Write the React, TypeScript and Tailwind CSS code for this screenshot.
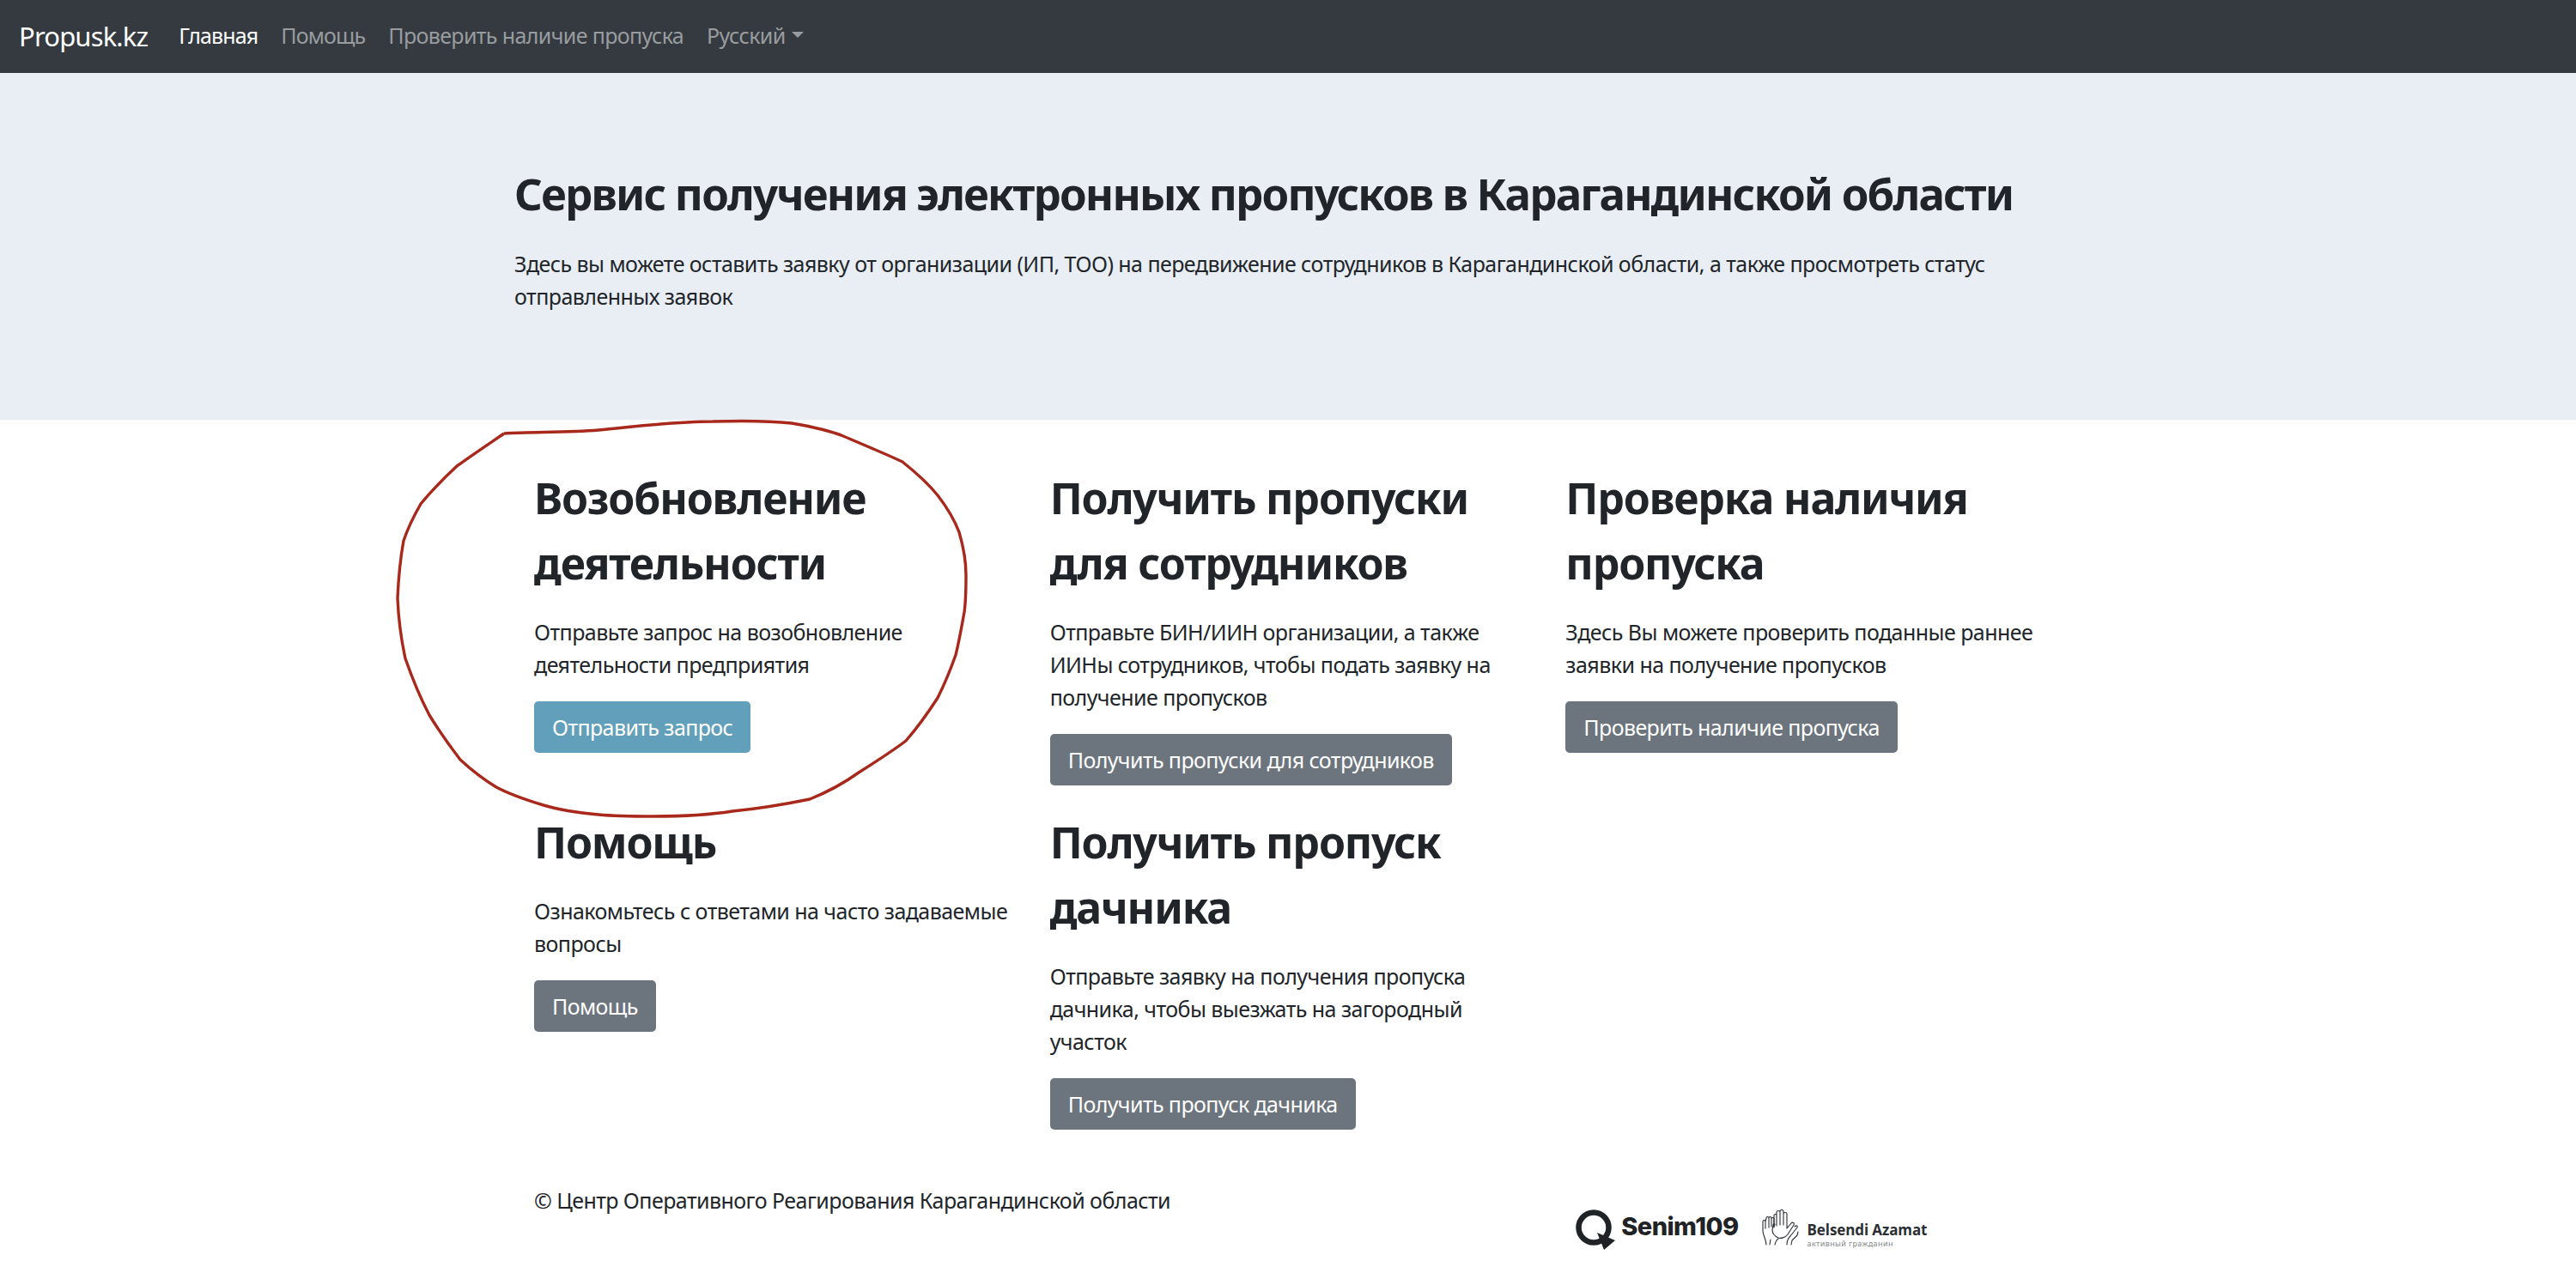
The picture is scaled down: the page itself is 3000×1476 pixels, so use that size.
const font = { fontFamily: '"Noto Sans", "Open Sans", sans-serif' };

interface CardProps {
  title: string[];
  text: string[];
  button: string;
  info?: boolean;
}

const Card = ({ title, text, button, info }: CardProps) => {
  return (
    <div className="px-[23px]">
      <h2 className="mb-[23px] text-[50px] leading-[76px] font-bold tracking-[-1.2px] text-[#212529]">
        {title.map((line) => (
          <div key={line}>{line}</div>
        ))}
      </h2>
      <p className="mb-[24px] text-[25px] leading-[38px] tracking-[-0.55px] text-[#212529]">
        {text.map((line) => (
          <span key={line} className="block whitespace-nowrap">
            {line}
          </span>
        ))}
      </p>
      <a
        className={
          info
            ? "inline-block h-[60px] rounded-[5px] bg-[#619fbb] px-[21px] text-[25px] leading-[60px] tracking-[-0.6px] text-white"
            : "inline-block h-[60px] rounded-[5px] bg-[#6c757d] px-[21px] text-[25px] leading-[60px] tracking-[-0.6px] text-white"
        }
      >
        {button}
      </a>
    </div>
  );
};

const SenimLogo = () => (
  <div className="flex items-start">
    <svg width="47" height="48" viewBox="0 0 47 48">
      <circle cx="21" cy="21" r="17.5" fill="none" stroke="#1f2326" strokeWidth="6.5" />
      <path d="M25 27 L46 36 L33 47 Z" fill="#1f2326" />
    </svg>
    <span
      className="ml-[6px] text-[29px] leading-[40px] font-extrabold tracking-[-0.6px] text-[#1f2326]"
      style={{ fontFamily: "Inter, sans-serif" }}
    >
      Senim109
    </span>
  </div>
);

const BelsendiLogo = () => (
  <div className="flex items-start">
    <svg width="43" height="42" viewBox="0 0 43 42" fill="none" stroke="#2b2f33" strokeWidth="1.1" strokeLinejoin="round" strokeLinecap="round">
      <path d="M5 41 C5 35 1 30 1 25 L1 14 C1 12 4 12 4 14 L4 22 M4 14 L5 10 C5 8 8 8 8 10 L8 21 M8 10 C8 8 11 8 11 10 L11 20 M11 11 C11 9 14 9 14 11 L14 20" />
      <path d="M14 21 L14 7 C14 5 17 5 17 7 L17 19 M17 7 L17 3 C17 1 21 1 21 3 L21 18 M21 3 L21 2 C21 0 25 0 25 2 L25 18 M25 5 C25 3 29 3 29 5 L29 22 L34 16 C36 14 38 16 37 18 L30 29 C27 33 22 34 19 33 C15 31 12 28 12 24 L13 18 C13 16 15 16 15 18" />
      <path d="M15 41 C16 38 16 36 19 34 M9 41 L10 35 M29 41 C29 36 30 34 33 31 L41 21 C42 19 40 18 38 20 M34 41 L35 36 L41 30 L42 26" />
    </svg>
    <div className="ml-[10px] mt-[12px] flex flex-col">
      <span
        className="text-[17px] leading-[23px] font-bold tracking-[-0.1px] whitespace-nowrap text-[#2b2f33]"
        style={{ fontFamily: '"Open Sans", sans-serif' }}
      >
        Belsendi Azamat
      </span>
      <span className="text-[9px] leading-[10px] tracking-[0.4px] whitespace-nowrap text-[#85888b]">
        активный гражданин
      </span>
    </div>
  </div>
);

const App = () => {
  return (
    <div className="relative h-[1476px] overflow-hidden bg-white" style={font}>
      <nav className="flex h-[85px] items-center bg-[#343a40] pb-[1px] pl-[22px]">
        <a className="mr-[36px] text-[31px] tracking-[-0.85px] text-white">Propusk.kz</a>
        <a className="mr-[27px] text-[25px] tracking-[-0.9px] text-white">Главная</a>
        <a className="mr-[27px] text-[25px] tracking-[-0.9px] text-[#999c9f]">Помощь</a>
        <a className="mr-[27px] text-[25px] tracking-[-0.62px] text-[#999c9f]">Проверить наличие пропуска</a>
        <a className="flex items-center text-[25px] tracking-[-0.62px] text-[#999c9f]">
          Русский
          <span className="mb-[3px] ml-[7px] h-0 w-0 border-x-[7px] border-t-[7px] border-x-transparent border-t-[#999c9f]" />
        </a>
      </nav>

      <section className="h-[404px] bg-[#e9eef5]">
        <div className="mx-auto w-[1802px] pt-[104px]">
          <h1 className="mb-[27px] text-[51px] leading-[72px] font-bold tracking-[-1.85px] text-[#212529]">
            Сервис получения электронных пропусков в Карагандинской области
          </h1>
          <p className="text-[25px] leading-[38px] tracking-[-0.55px] text-[#212529]">
            <span className="block whitespace-nowrap">
              Здесь вы можете оставить заявку от организации (ИП, ТОО) на передвижение сотрудников в Карагандинской области, а также просмотреть статус
            </span>
            <span className="block">отправленных заявок</span>
          </p>
        </div>
      </section>

      <main className="mx-auto w-[1802px] pt-[53px]">
        <div className="grid grid-cols-3">
          <div className="h-[401px]">
            <Card
              title={["Возобновление", "деятельности"]}
              text={["Отправьте запрос на возобновление", "деятельности предприятия"]}
              button="Отправить запрос"
              info
            />
          </div>
          <Card
            title={["Получить пропуски", "для сотрудников"]}
            text={[
              "Отправьте БИН/ИИН организации, а также",
              "ИИНы сотрудников, чтобы подать заявку на",
              "получение пропусков",
            ]}
            button="Получить пропуски для сотрудников"
          />
          <Card
            title={["Проверка наличия", "пропуска"]}
            text={["Здесь Вы можете проверить поданные раннее", "заявки на получение пропусков"]}
            button="Проверить наличие пропуска"
          />
          <Card
            title={["Помощь"]}
            text={["Ознакомьтесь с ответами на часто задаваемые", "вопросы"]}
            button="Помощь"
          />
          <Card
            title={["Получить пропуск", "дачника"]}
            text={[
              "Отправьте заявку на получения пропуска",
              "дачника, чтобы выезжать на загородный",
              "участок",
            ]}
            button="Получить пропуск дачника"
          />
        </div>

        <footer className="mt-[63px] grid grid-cols-3">
          <p className="col-span-2 px-[23px] text-[25px] leading-[38px] tracking-[-0.55px] text-[#212529]">
            © Центр Оперативного Реагирования Карагандинской области
          </p>
          <div className="mt-[30px] flex gap-[27px] pl-[35px]">
            <SenimLogo />
            <BelsendiLogo />
          </div>
        </footer>
      </main>

      {/* red marker circled by hand over the first card */}
      <svg className="pointer-events-none absolute left-0 top-0" width="3000" height="1476" fill="none">
        <path
          d="M587 505 C620 503 660 504 697 501 C740 497 785 491 830 491 C865 490 895 490 922 493 C945 497 965 501 982 508 C1005 518 1030 528 1051 538 C1066 550 1080 562 1092 577 C1102 590 1111 604 1117 620 C1122 637 1125 653 1125 670 C1125 685 1125 699 1123 713 C1120 730 1117 747 1113 763 C1107 780 1100 797 1092 813 C1081 830 1069 847 1055 863 C1038 876 1019 888 1000 900 C982 913 963 923 943 931 C914 937 884 942 853 945 C822 950 792 951 761 951 C739 951 718 951 697 949 C675 947 653 944 633 938 C613 932 595 926 578 917 C563 908 549 897 536 885 C523 868 511 851 500 833 C489 812 480 790 472 767 C467 744 464 720 463 697 C464 674 466 652 470 630 C475 615 482 601 490 587 C503 571 517 557 532 543 C550 530 568 518 587 505"
          stroke="#a8281c"
          strokeWidth="3.4"
        />
      </svg>
    </div>
  );
};

export default App;
